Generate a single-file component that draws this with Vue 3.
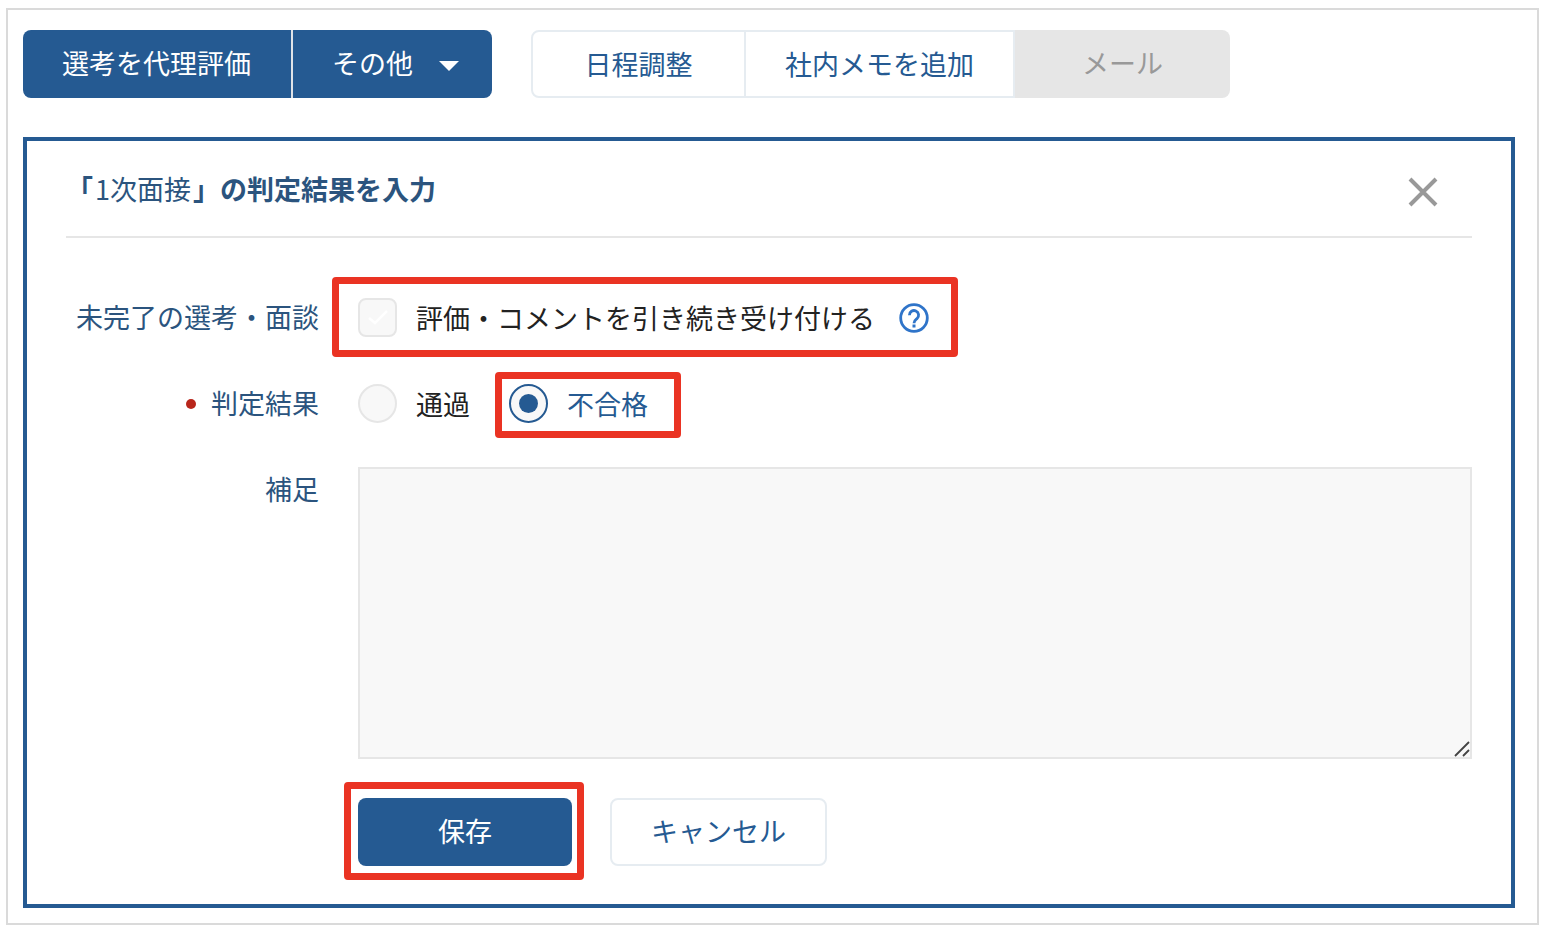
<script setup>
import { ref } from 'vue'

const keepAccepting = ref(false)
const result = ref('fail')
const note = ref('')
</script>

<template>
  <main class="frame">
    <div class="toolbar">
      <div class="group">
        <button type="button" class="btn primary first">選考を代理評価</button>
        <button type="button" class="btn primary more" aria-haspopup="menu">
          その他
          <svg class="caret" viewBox="0 0 20 10" aria-hidden="true"><path d="M0 0h20L10 10z" fill="#fff" /></svg>
        </button>
      </div>
      <div class="group">
        <button type="button" class="btn outline first">日程調整</button>
        <button type="button" class="btn outline middle">社内メモを追加</button>
        <button type="button" class="btn muted" disabled>メール</button>
      </div>
    </div>

    <section class="panel">
      <header class="head">
        <h1 class="title">「<span class="stage">1次面接</span>」の判定結果を入力</h1>
        <button type="button" class="close" aria-label="閉じる">
          <svg viewBox="0 0 30 30" aria-hidden="true">
            <path d="M2 2l26 26M28 2L2 28" stroke="#999" stroke-width="4" fill="none" />
          </svg>
        </button>
      </header>

      <form class="form" @submit.prevent>
        <span id="pending-label" class="label">未完了の選考・面談</span>
        <div class="field" role="group" aria-labelledby="pending-label">
          <div class="marked pending">
            <label class="choice">
              <span class="tick">
                <input v-model="keepAccepting" type="checkbox" class="control box" />
                <svg class="check" viewBox="0 0 39 39" aria-hidden="true">
                  <path d="M11 20l6 5 12-12" stroke="#fff" stroke-width="2.5" fill="none" />
                </svg>
              </span>
              評価・コメントを引き続き受け付ける
            </label>
            <button type="button" class="help" aria-label="ヘルプ">
              <svg viewBox="0 0 30 30" aria-hidden="true">
                <circle cx="15" cy="15" r="13.3" stroke="#2f74c9" stroke-width="2.8" fill="none" />
                <path d="M10.4 12.2a4.6 4.6 0 1 1 7.6 3.4C16.3 17 15 17.6 15 20.2" stroke="#2f74c9" stroke-width="2.8" fill="none" />
                <rect x="13.5" y="21.5" width="3" height="3" fill="#2f74c9" />
              </svg>
            </button>
          </div>
        </div>

        <span id="result-label" class="label required">判定結果</span>
        <div class="field radios" role="radiogroup" aria-labelledby="result-label">
          <label class="choice">
            <input v-model="result" type="radio" name="result" value="pass" class="control radio" />
            通過
          </label>
          <label class="choice marked fail">
            <input v-model="result" type="radio" name="result" value="fail" class="control radio" />
            不合格
          </label>
        </div>

        <label class="label" for="note">補足</label>
        <div class="field note">
          <textarea id="note" v-model="note"></textarea>
          <svg class="grip" viewBox="0 0 16 16" aria-hidden="true">
            <path d="M1 15L15 1M9 15l6-6" stroke="#444" stroke-width="1.8" fill="none" />
          </svg>
        </div>

        <div class="actions">
          <div class="marked save">
            <button type="submit" class="btn primary solo">保存</button>
          </div>
          <button type="button" class="btn outline solo">キャンセル</button>
        </div>
      </form>
    </section>
  </main>
</template>

<style>
body {
  background: #fff;
}
</style>

<style scoped>
.frame,
.frame * {
  box-sizing: border-box;
}
.frame {
  margin: 8px 7px 7px 6px;
  padding: 20px 22px 15px 15px;
  border: 2px solid #dadada;
  background: #fff;
  color: #222;
  font-family: "Noto Sans CJK JP", sans-serif;
  font-size: 27px;
  line-height: 40px;
}
button,
textarea {
  font: inherit;
}
button {
  cursor: pointer;
}
.toolbar {
  display: flex;
  gap: 39px;
  margin-bottom: 39px;
}
.group {
  display: flex;
}
.btn {
  display: flex;
  align-items: center;
  justify-content: center;
  min-width: 215px;
  height: 68px;
  padding: 0 39px;
  border: 0;
  white-space: nowrap;
}
.primary {
  padding-bottom: 2px;
  background: #255a92;
  color: #fff;
}
.primary.first {
  padding-right: 40px;
  border-right: 2px solid #dfe3e8;
  border-radius: 8px 0 0 8px;
}
.more {
  min-width: 0;
  padding-right: 33px;
  gap: 26px;
  border-radius: 0 8px 8px 0;
}
.caret {
  width: 20px;
  height: 10px;
  margin-top: 6px;
}
.outline {
  border: 2px solid #e6ecf1;
  background: #fff;
  color: #255a92;
}
.outline.first {
  border-radius: 8px 0 0 8px;
}
.middle {
  border-left: 0;
}
.muted {
  padding-bottom: 2px;
  border-radius: 0 8px 8px 0;
  background: #e6e6e6;
  color: #999;
  cursor: default;
}
.solo {
  min-width: 214px;
  padding-bottom: 2px;
  border-radius: 8px;
}
.panel {
  padding: 0 39px 38px;
  border: 4px solid #255a92;
}
.head {
  display: flex;
  align-items: center;
  justify-content: space-between;
  height: 97px;
  padding-right: 34px;
  border-bottom: 2px solid #e6e6e6;
}
.title {
  margin: 0;
  color: #2b547e;
  font-size: 27px;
  font-weight: 700;
}
.stage {
  padding: 0 2px;
  font-weight: 400;
}
.close {
  display: flex;
  padding: 0;
  border: 0;
  background: none;
}
.close svg,
.help svg {
  width: 30px;
  height: 30px;
}
.close svg {
  margin-top: 6px;
}
.form {
  display: grid;
  grid-template-columns: 253px minmax(0, 1fr);
  gap: 41px 39px;
  padding-top: 57px;
}
.label {
  color: #2b547e;
  line-height: 43px;
  text-align: right;
  white-space: nowrap;
}
.required::before {
  content: "";
  display: inline-block;
  width: 10px;
  height: 10px;
  margin-right: 15px;
  border-radius: 50%;
  background: #b8261b;
  vertical-align: 5px;
}
.field {
  display: flex;
  align-items: flex-start;
}
.radios {
  gap: 39px;
}
.choice {
  display: flex;
  align-items: center;
  gap: 19px;
  height: 45px;
  white-space: nowrap;
  cursor: pointer;
}
.pending {
  display: flex;
  align-items: center;
  gap: 24px;
}
.tick {
  position: relative;
  display: flex;
}
.check {
  position: absolute;
  inset: 0;
  pointer-events: none;
}
.control {
  appearance: none;
  display: grid;
  place-items: center;
  width: 39px;
  height: 39px;
  margin: 0;
  border: 2px solid #e6e6e6;
  background: #f8f8f8;
}
.box {
  border-radius: 8px;
}
.box:checked {
  border-color: #255a92;
  background: #255a92;
}
.radio {
  border-radius: 50%;
}
.radio:checked {
  border-color: #255a92;
}
.radio:checked::before {
  content: "";
  width: 19px;
  height: 19px;
  border-radius: 50%;
  background: #255a92;
}
.help {
  display: flex;
  padding: 0;
  border: 0;
  background: none;
}
.fail {
  color: #255a92;
}
.note {
  position: relative;
}
textarea {
  display: block;
  width: 100%;
  height: 292px;
  padding: 12px 16px;
  border: 2px solid #e6e6e6;
  border-radius: 0;
  background: #f8f8f8;
  color: #222;
  resize: none;
}
.grip {
  position: absolute;
  right: 2px;
  bottom: 2px;
  width: 16px;
  height: 16px;
  pointer-events: none;
}
.actions {
  grid-column: 2;
  display: flex;
  gap: 38px;
  margin-top: -2px;
}

/* Red callout frames drawn around the controls to notice */
.marked {
  position: relative;
}
.marked::after {
  content: "";
  position: absolute;
  border: 7px solid #ea3323;
  border-radius: 4px;
  pointer-events: none;
}
.pending::after {
  inset: -18px -29px -17px -26px;
}
.fail::after {
  inset: -9px -33px -12px -14px;
}
.save::after {
  inset: -16px -12px -14px -14px;
}
</style>
